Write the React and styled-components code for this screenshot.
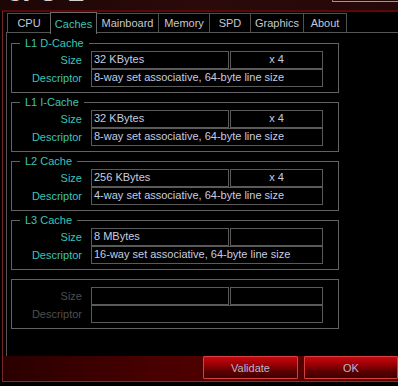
import styled, { createGlobalStyle } from 'styled-components';

const GlobalStyle = createGlobalStyle`
  html, body {
    margin: 0;
    padding: 0;
    background: #000;
  }
  body {
    font-family: "Liberation Sans", Arial, sans-serif;
    font-size: 11px;
  }
`;

const Window = styled.div`
  width: 398px;
  height: 386px;
  background: #000;
  overflow: hidden;
  display: flex;
  flex-direction: column;
`;

const TitleStrip = styled.div`
  height: 10px;
  flex: none;
  background: linear-gradient(90deg, #1c0606 0%, #2c0a0a 50%, #240808 100%);
  overflow: hidden;
  display: flex;
  justify-content: space-between;
  align-items: flex-start;
`;

const Logo = styled.span`
  margin: -17px 0 0 5px;
  font-family: "DejaVu Sans", sans-serif;
  font-weight: bold;
  font-size: 22px;
  line-height: 22px;
  color: #d8d0d0;
  letter-spacing: 1px;
`;

const ComboEdge = styled.div`
  width: 65px;
  height: 1px;
  border-left: 1px solid #9a7a7a;
  border-bottom: 1px solid #b09090;
`;

const Frame = styled.div`
  flex: none;
  height: 369px;
  margin-left: 2px;
  border-top: 2px solid #5a0808;
  border-left: 1px solid #7a2424;
  border-bottom: 1px solid #8a2c2c;
  padding-left: 3px;
  display: flex;
  flex-direction: column;
`;

const TabRow = styled.div`
  height: 21px;
  margin-bottom: -1px;
  padding-left: 1px;
  display: flex;
  align-items: flex-start;
`;

const Tab = styled.div`
  box-sizing: border-box;
  width: ${p => p.$w}px;
  height: ${p => (p.$active ? 22 : 20)}px;
  margin-top: ${p => (p.$active ? 0 : 1)}px;
  margin-left: -1px;
  &:first-child { margin-left: 0; }
  border: 1px solid ${p => (p.$active ? '#6a6a6a' : '#505050')};
  border-bottom: none;
  background: #000;
  color: ${p => (p.$active ? '#3cc4b4' : '#c6c8d2')};
  position: ${p => (p.$active ? 'relative' : 'static')};
  z-index: ${p => (p.$active ? 2 : 'auto')};
  display: flex;
  align-items: center;
  justify-content: center;
  padding-top: ${p => (p.$active ? 1 : 0)}px;
  line-height: 13px;
`;

const Panel = styled.div`
  box-sizing: border-box;
  height: 325px;
  border: 1px solid #555;
  border-right: none;
  padding: 10px 0 0 4px;
  display: flex;
  flex-direction: column;
  gap: 9px;
`;

const Group = styled.div`
  position: relative;
  box-sizing: border-box;
  width: 328px;
  height: 50px;
  border: 1px solid #626262;
  padding: 7px 15px 5px 0;
  display: grid;
  grid-template-columns: 70px 1fr;
  grid-template-rows: 18px 18px;
  column-gap: 9px;
`;

const Legend = styled.span`
  position: absolute;
  top: -7px;
  left: 8px;
  padding: 0 5px;
  background: #000;
  color: #3cc4b4;
  line-height: 13px;
`;

const Label = styled.div`
  text-align: right;
  align-self: center;
  color: ${p => (p.$off ? '#4e4e4e' : '#3cc4b4')};
  line-height: 13px;
`;

const FieldRow = styled.div`
  display: flex;
  gap: 1px;
`;

const Field = styled.div`
  box-sizing: border-box;
  width: ${p => (p.$w ? `${p.$w}px` : 'auto')};
  flex: ${p => (p.$w ? 'none' : '1')};
  height: 18px;
  border: 1px solid #5a5a5a;
  padding: 0 2px;
  color: #c6cde0;
  line-height: 15px;
  text-align: ${p => (p.$center ? 'center' : 'left')};
  white-space: nowrap;
  overflow: hidden;
`;

const Band = styled.div`
  flex: 1;
  margin-left: -3px;
  background: linear-gradient(90deg, #2a0000 0%, #4a0000 40%, #5e0000 100%);
  display: flex;
  justify-content: flex-end;
  gap: 6px;
  align-items: flex-start;
  margin-top: -1px;
`;

const Button = styled.button`
  box-sizing: border-box;
  width: ${p => p.$w}px;
  height: 23px;
  flex: none;
  margin: 0;
  border: 1px solid #d84040;
  border-radius: 1px;
  background: linear-gradient(180deg, #c80810 0%, #9a0006 35%, #5a0000 70%, #3e0000 100%);
  color: #b4bad0;
  font-family: "Liberation Sans", Arial, sans-serif;
  font-size: 11px;
  padding: 0;
  cursor: pointer;
`;

const tabs = [
  ['CPU', 44],
  ['Caches', 47],
  ['Mainboard', 63],
  ['Memory', 52],
  ['SPD', 42],
  ['Graphics', 54],
  ['About', 44],
];

const caches = [
  { name: 'L1 D-Cache', size: '32 KBytes', count: 'x 4', desc: '8-way set associative, 64-byte line size' },
  { name: 'L1 I-Cache', size: '32 KBytes', count: 'x 4', desc: '8-way set associative, 64-byte line size' },
  { name: 'L2 Cache', size: '256 KBytes', count: 'x 4', desc: '4-way set associative, 64-byte line size' },
  { name: 'L3 Cache', size: '8 MBytes', count: '', desc: '16-way set associative, 64-byte line size' },
  { name: '', size: '', count: '', desc: '', off: true },
];

function CacheGroup({ c }) {
  return (
    <Group>
      {c.name && <Legend>{c.name}</Legend>}
      <Label $off={c.off}>Size</Label>
      <FieldRow>
        <Field $w={138}>{c.size}</Field>
        <Field $center>{c.count}</Field>
      </FieldRow>
      <Label $off={c.off}>Descriptor</Label>
      <Field>{c.desc}</Field>
    </Group>
  );
}

export default function App() {
  return (
    <>
      <GlobalStyle />
      <Window>
        <TitleStrip>
          <Logo>CPU-Z</Logo>
          <ComboEdge />
        </TitleStrip>
        <Frame>
          <TabRow>
            {tabs.map(([t, w]) => (
              <Tab key={t} $w={w} $active={t === 'Caches'}>{t}</Tab>
            ))}
          </TabRow>
          <Panel>
            {caches.map((c, i) => (
              <CacheGroup key={i} c={c} />
            ))}
          </Panel>
          <Band>
            <Button $w={95}>Validate</Button>
            <Button $w={94}>OK</Button>
          </Band>
        </Frame>
      </Window>
    </>
  );
}
